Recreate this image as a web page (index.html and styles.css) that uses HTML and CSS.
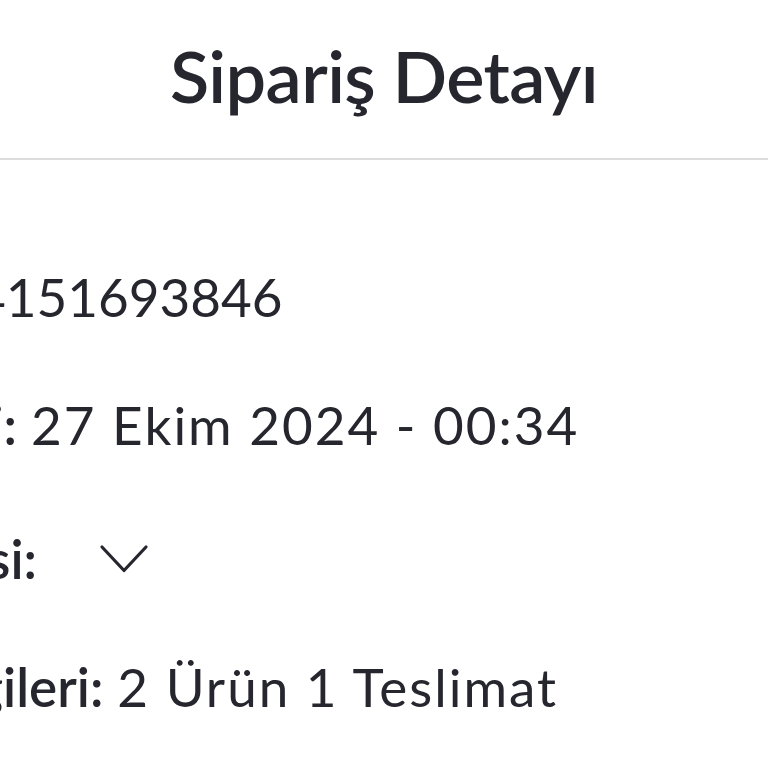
FILE: index.html
```html
<!DOCTYPE html>
<html lang="tr">
<head>
<meta charset="utf-8">
<title>Sipariş Detayı</title>
<link rel="stylesheet" href="styles.css">
</head>
<body>
<header class="header">
  <h1 class="title">Sipariş Detayı</h1>
</header>
<main class="details">
  <div class="row"><span class="label">Sipariş No:</span> <span class="value order-no">4151693846</span></div>
  <div class="row"><span class="label">Sipariş Tarihi:</span> <span class="value">27 Ekim 2024 - 00:34</span></div>
  <div class="row row-toggle"><span class="label">Fatura Adresi:</span>
    <svg class="chevron" viewBox="0 0 50 30" width="50" height="30" aria-hidden="true"><polyline points="3,3 25,26.5 47,3" fill="none" stroke="#26262e" stroke-width="3.2" stroke-linecap="round" stroke-linejoin="round"/></svg>
  </div>
  <div class="row"><span class="label">Teslimat Bilgileri:</span> <span class="value">2 Ürün 1 Teslimat</span></div>
</main>
</body>
</html>
```
FILE: styles.css
```css
html, body {
  margin: 0;
  padding: 0;
  background: #ffffff;
  overflow: hidden;
}
body {
  width: 768px;
  height: 768px;
  font-family: "Lato", "Noto Sans", sans-serif;
  color: #26262e;
}
.header {
  height: 160px;
  display: flex;
  align-items: center;
  justify-content: center;
  border-bottom: 2px solid #dcdcdc;
  box-sizing: border-box;
  padding-bottom: 8px;
}
.title {
  margin: 0;
  font-size: 72px;
  font-weight: 600;
  letter-spacing: -0.6px;
}
.details {
  padding-top: 72px;
  margin-left: -290px;
  white-space: nowrap;
}
.row {
  display: flex;
  align-items: center;
  gap: 14px;
  height: 128px;
  font-size: 53px;
}
.row-toggle {
  height: 134px;
  padding-top: 6px;
  box-sizing: border-box;
}
.label {
  font-weight: 600;
}
.row-toggle .label {
  padding-left: 6px;
}
.value {
  font-weight: 400;
  letter-spacing: 2px;
}
.order-no {
  letter-spacing: 0;
}
.chevron {
  margin-left: 48px;
  margin-top: 2px;
}
```
